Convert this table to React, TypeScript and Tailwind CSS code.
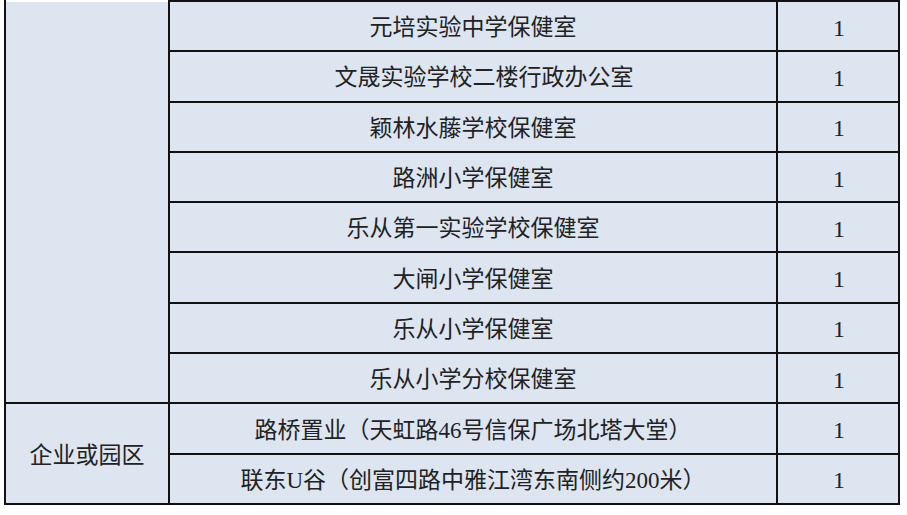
const schoolRows = [
  { name: "元培实验中学保健室", shift: false },
  { name: "文晟实验学校二楼行政办公室", shift: true },
  { name: "颖林水藤学校保健室", shift: false },
  { name: "路洲小学保健室", shift: false },
  { name: "乐从第一实验学校保健室", shift: false },
  { name: "大闸小学保健室", shift: false },
  { name: "乐从小学保健室", shift: false },
  { name: "乐从小学分校保健室", shift: false },
];

const parkRows = [
  { name: "路桥置业（天虹路46号信保广场北塔大堂）", shift: false },
  { name: "联东U谷（创富四路中雅江湾东南侧约200米）", shift: false },
];

const cell = "bg-[#dce5f0] flex items-center justify-center pt-[3px]";

// latin letters and digits get the serif face, like the source sheet
function Text({ value }: { value: string }) {
  const parts = value.split(/([A-Za-z0-9]+)/).filter(Boolean);
  return (
    <span>
      {parts.map((p, i) =>
        /^[A-Za-z0-9]+$/.test(p) ? (
          <span key={i} className="font-['Liberation_Serif',serif]">
            {p}
          </span>
        ) : (
          <span key={i}>{p}</span>
        )
      )}
    </span>
  );
}

export default function App() {
  return (
    <div className="w-[907px] h-[515px] bg-white">
      <div
        className="ml-[4px] w-[896px] h-[505px] bg-[#111] px-[2px] pb-[2px] pt-[2px] grid grid-cols-[162px_606px_minmax(0,1fr)] grid-rows-[repeat(10,minmax(0,1fr))] gap-[2px] text-[#222] text-[23px] leading-none"
        style={{ fontFamily: '"Liberation Serif", "Noto Sans CJK SC", serif' }}
      >
        {/* first group: continues from the previous page */}
        <div className={`${cell} row-span-8 -mt-[2px] border-t-2 border-white`} />
        {schoolRows.map((r) => (
          <Row key={r.name} name={r.name} shift={r.shift} />
        ))}

        <div className={`${cell} row-span-2`}>企业或园区</div>
        {parkRows.map((r) => (
          <Row key={r.name} name={r.name} shift={r.shift} />
        ))}
      </div>
    </div>
  );
}

function Row({ name, shift }: { name: string; shift: boolean }) {
  return (
    <>
      <div className={`${cell} ${shift ? "pl-[22px]" : ""}`}>
        <Text value={name} />
      </div>
      <div className={`${cell} text-[24px] pl-[2px] font-['Liberation_Serif',serif]`}>1</div>
    </>
  );
}
